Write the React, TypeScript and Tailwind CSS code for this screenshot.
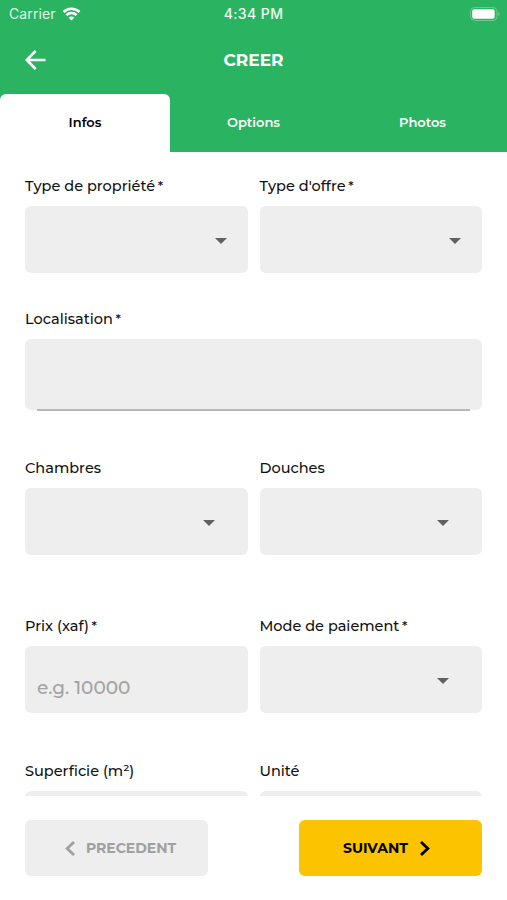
import type { ReactNode } from 'react';

const FONT = "font-[Montserrat,Inter,sans-serif]";

function Label({ children, required }: { children: ReactNode; required?: boolean }) {
  return (
    <div className="h-5 mb-2.5 flex items-center">
      <label className="text-[14.5px] leading-5 font-medium text-[#111] whitespace-nowrap">
        {children}
        {required && <span className="text-[13.5px] -ml-px"> *</span>}
      </label>
    </div>
  );
}

function Caret() {
  return (
    <svg width="12" height="6" viewBox="0 0 12 6" className="shrink-0 mt-0.5">
      <path d="M0 0H12L6 6Z" fill="#616161" />
    </svg>
  );
}

function SelectBox({ inset = 'pr-[21px]' }: { inset?: string }) {
  return (
    <div className={`h-[67px] rounded-md bg-[#eee] flex items-center justify-end ${inset}`}>
      <Caret />
    </div>
  );
}

export default function App() {
  return (
    <div className={`w-full h-screen bg-white flex flex-col overflow-hidden ${FONT}`}>
      <header className="bg-[#2ab461] h-[152px] shrink-0 flex flex-col text-white">
        <div className="h-7 grid grid-cols-3 items-center px-[9px] font-[Inter,sans-serif]">
          <div className="flex items-center gap-1.5 text-[#dff8e8]">
            <span className="text-[14px] leading-5 tracking-[0.1px]">Carrier</span>
            <svg width="19" height="14" viewBox="0 0 18 14" fill="none" stroke="#fff" strokeWidth="2.500">
              <path d="M1 5C5.500 0.700 12.500 0.700 17 5" />
              <path d="M3.900 8.200C6.800 5.400 11.200 5.400 14.100 8.200" />
              <path d="M9 13.500L6.200 10.700C7.800 9.200 10.200 9.200 11.800 10.700Z" fill="#fff" stroke="none" />
            </svg>
          </div>
          <span className="text-center text-[14px] leading-5 font-medium tracking-[0.4px] text-[#effcf3]">4:34 PM</span>
          <div className="flex items-center justify-end -mr-0.5">
            <svg width="30" height="14" viewBox="0 0 30 14">
              <rect x="0.500" y="0.500" width="26.500" height="13" rx="4" fill="none" stroke="#6dcb90" />
              <rect x="2.200" y="2.200" width="22.500" height="9.600" rx="2" fill="#fff" />
              <path d="M28.300 5V9C30 8.300 30 5.700 28.300 5Z" fill="#6dcb90" />
            </svg>
          </div>
        </div>
        <div className="h-[66px] pb-0.5 grid grid-cols-[60px_1fr_60px] items-center">
          <svg width="22" height="20" viewBox="0 0 22 20" className="ml-[25px]" fill="none" stroke="#fff" strokeWidth="2.700">
            <path d="M20.500 10H2M10.700 0.900L1.800 10L10.700 19.100" />
          </svg>
          <h1 className="text-center text-[17px] leading-6 font-bold">CREER</h1>
        </div>
        <div className="h-[58px] grid grid-cols-3 text-[13px] font-semibold">
          <button className="bg-white text-black rounded-t-md w-[170px]">Infos</button>
          <button>Options</button>
          <button>Photos</button>
        </div>
      </header>

      <main className="flex-1 min-h-0 overflow-hidden px-[25px] pt-6">
        <div className="grid grid-cols-2 gap-x-3 mb-9">
          <div>
            <Label required>Type de propriété</Label>
            <SelectBox />
          </div>
          <div>
            <Label required>Type d'offre</Label>
            <SelectBox />
          </div>
        </div>
        <div className="mb-12">
          <Label required>Localisation</Label>
          <div className="h-[71px] rounded-md bg-[#eee] px-3 flex flex-col justify-end">
            <div className="h-0.5 -mb-px bg-[#b8b8b8]" />
          </div>
        </div>
        <div className="grid grid-cols-2 gap-x-3 mb-[61px]">
          <div>
            <Label>Chambres</Label>
            <SelectBox inset="pr-[33px]" />
          </div>
          <div>
            <Label>Douches</Label>
            <SelectBox inset="pr-[33px]" />
          </div>
        </div>
        <div className="grid grid-cols-2 gap-x-3 mb-12">
          <div>
            <Label required>Prix (xaf)</Label>
            <input
              className="block w-full h-[67px] rounded-md bg-[#eee] px-3 pt-4 text-[18.5px] font-medium placeholder:text-[#a3a3a3] outline-none"
              placeholder="e.g. 10000"
            />
          </div>
          <div>
            <Label required>Mode de paiement</Label>
            <SelectBox inset="pr-[33px]" />
          </div>
        </div>
        <div className="grid grid-cols-2 gap-x-3">
          <div>
            <Label>Superficie (m²)</Label>
            <SelectBox />
          </div>
          <div>
            <Label>Unité</Label>
            <SelectBox />
          </div>
        </div>
      </main>

      <footer className="h-[104px] shrink-0 px-[25px] pt-6 flex items-start justify-between">
        <button className="w-[183px] h-14 pl-2 rounded-md bg-[#eee] text-[#a0a0a0] flex items-center justify-center gap-[11px] text-[14px] font-bold">
          <svg width="10" height="15" viewBox="0 0 10 15" fill="none" stroke="currentColor" strokeWidth="2.800">
            <path d="M9 1L2.200 7.500L9 14" />
          </svg>
          PRECEDENT
        </button>
        <button className="w-[183px] h-14 pr-2 rounded-md bg-[#fcc400] text-black flex items-center justify-center gap-3 text-[14px] font-bold">
          SUIVANT
          <svg width="10" height="15" viewBox="0 0 10 15" fill="none" stroke="currentColor" strokeWidth="2.800">
            <path d="M1 1L7.800 7.500L1 14" />
          </svg>
        </button>
      </footer>
    </div>
  );
}
